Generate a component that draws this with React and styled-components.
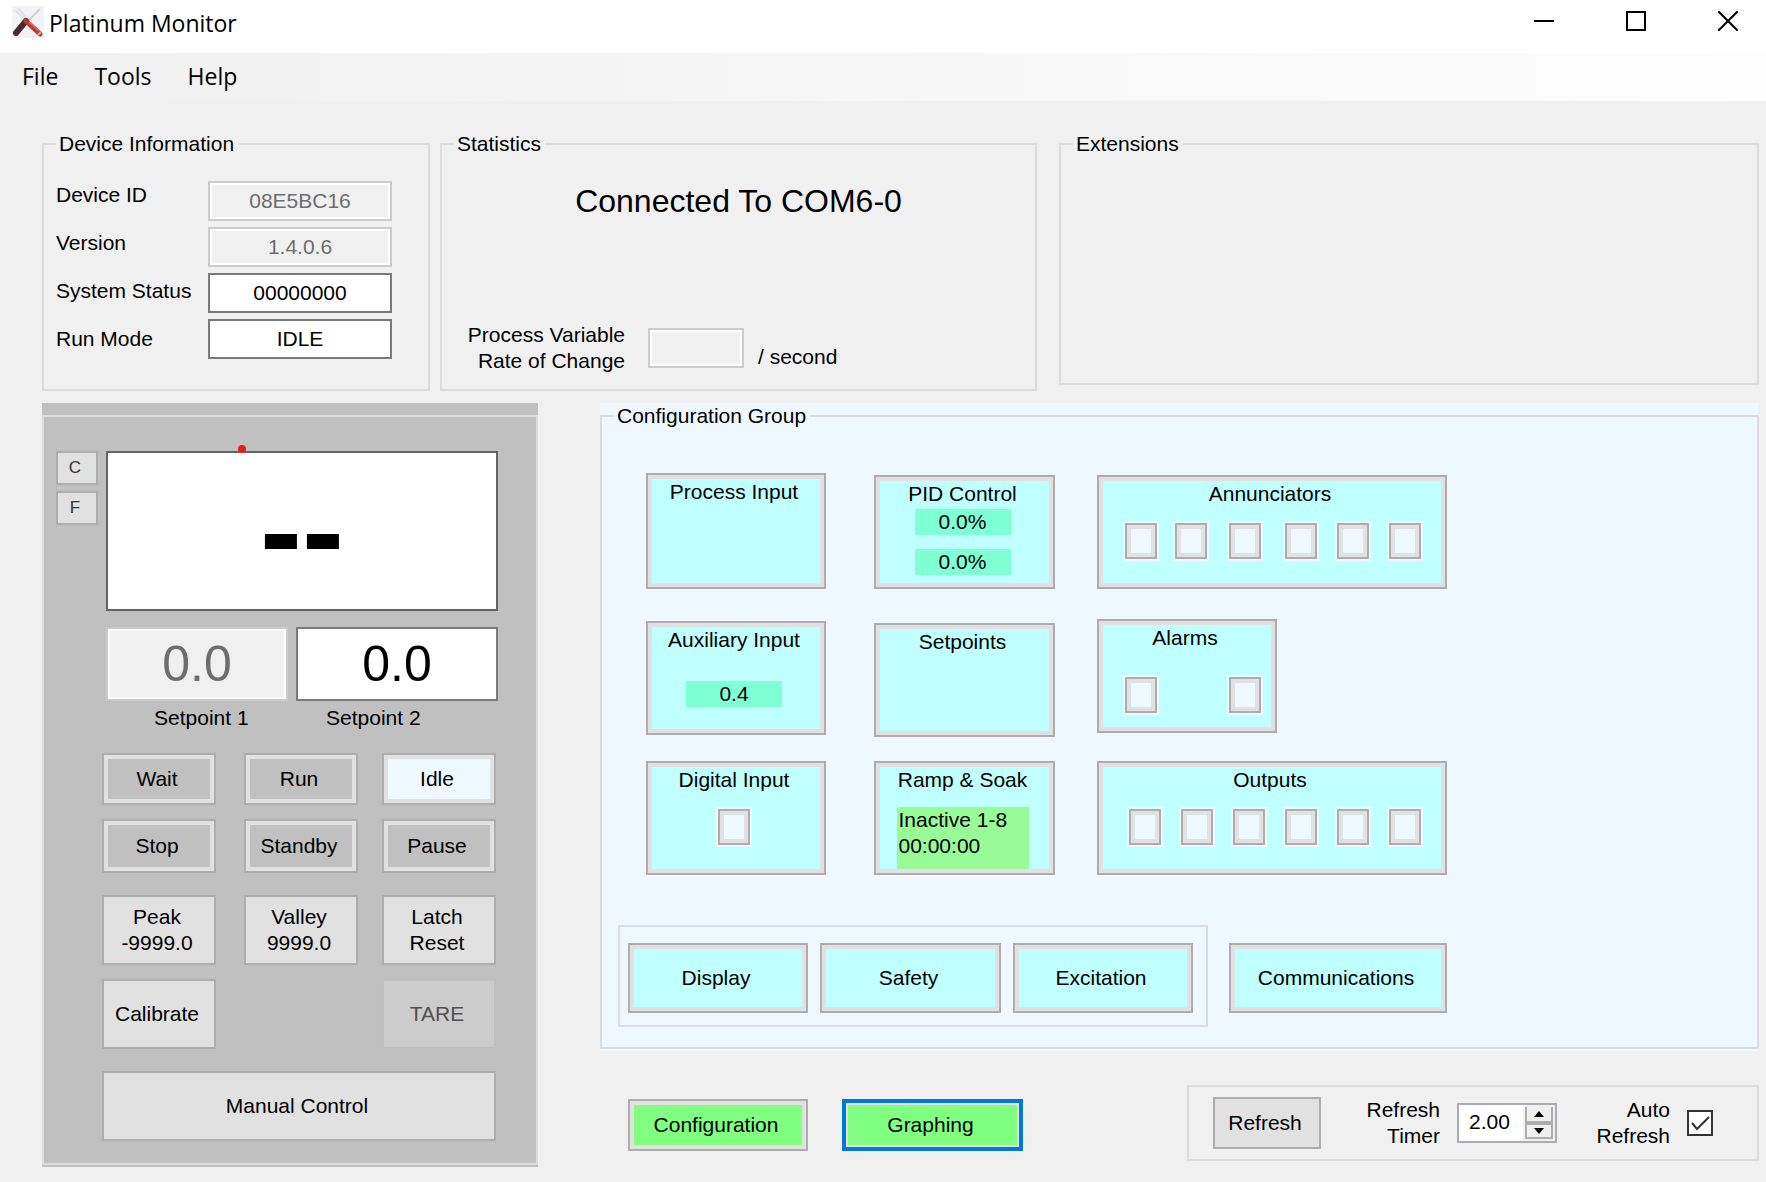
import React, { useState } from "react";
import styled, { createGlobalStyle, css } from "styled-components";

const GlobalStyle = createGlobalStyle`
  *, *::before, *::after { box-sizing: border-box; }
  body {
    margin: 0;
    background: #f0f0f0;
    color: #000;
    font: 21px/26px "Liberation Sans", Arial, sans-serif;
  }
  button, input { font: inherit; color: inherit; margin: 0; border-radius: 0; }
  fieldset { margin: 0; min-width: 0; }
`;

const Window = styled.div`
  display: flex;
  flex-direction: column;
  min-height: 100vh;
`;

/* ---------- title bar and menu ---------- */

const TitleBar = styled.header`
  display: flex;
  align-items: flex-start;
  gap: 5px;
  height: 53px;
  padding: 6px 18px 0 12px;
  background: #fff;
`;

const Title = styled.h1`
  flex: 1;
  margin: 0;
  font: 400 23px/34px "Open Sans", "Noto Sans", sans-serif;
`;

const WindowControls = styled.div`
  display: flex;
  gap: 52px;
`;

const WindowButton = styled.button`
  display: grid;
  place-items: center;
  width: 40px;
  height: 30px;
  padding: 0;
  border: 0;
  background: none;
`;

const MenuBar = styled.nav`
  display: flex;
  align-items: center;
  gap: 36px;
  height: 48px;
  padding: 0 22px 2px;
  background: linear-gradient(90deg, #f0f0f0, #fdfdfd);
`;

const MenuItem = styled.button`
  padding: 0;
  border: 0;
  background: none;
  font: 400 23px/30px "Open Sans", "Noto Sans", sans-serif;
`;

/* ---------- groups ---------- */

const Main = styled.main`
  display: flex;
  flex-direction: column;
  gap: 12px;
  padding: 30px 7px 15px 42px;
`;

const TopRow = styled.div`
  display: flex;
  gap: 22px;
`;

const TopPair = styled.div`
  display: flex;
  gap: 10px;
`;

const Group = styled.fieldset`
  display: flex;
  flex-direction: column;
  padding: 0;
  border: 2px solid #dcdcdc;
`;

const Legend = styled.legend`
  margin-left: 12px;
  padding: 0 4px 0 3px;
`;

const DeviceGroup = styled(Group)`
  width: 388px;
`;

const StatisticsGroup = styled(Group)`
  width: 597px;
`;

const ExtensionsGroup = styled(Group)`
  flex: 1;
  margin-bottom: 6px;
`;

const DeviceBody = styled.div`
  display: flex;
  padding: 24px 12px 30px;
`;

const FieldLabels = styled.div`
  display: flex;
  flex-direction: column;
  gap: 22px;
  width: 152px;
  padding-top: 1px;
`;

const FieldInputs = styled.div`
  display: flex;
  flex-direction: column;
  gap: 6px;
`;

const Field = styled.input`
  width: ${(p) => p.$width}px;
  height: ${(p) => (p.$large ? 74 : 40)}px;
  padding: 0;
  border: 2px solid #7a7a7a;
  background: #fff;
  text-align: center;
  outline: none;
  ${(p) => p.$large && css`font-size: 50px;`}
  &:disabled {
    border-color: #ccc;
    background: #f0f0f0;
    box-shadow: inset 0 0 0 2px #fff;
    color: #6d6d6d;
  }
`;

const StatisticsBody = styled.div`
  display: flex;
  flex: 1;
  flex-direction: column;
  justify-content: space-between;
  padding: 28px 0 15px;
`;

const Connection = styled.p`
  margin: 0;
  font-size: 32px;
  line-height: 32px;
  text-align: center;
`;

const RateRow = styled.div`
  display: flex;
  align-items: center;
`;

const RateLabel = styled.label`
  width: 183px;
  margin-right: 23px;
  text-align: right;
`;

const RateUnit = styled.span`
  padding: 18px 0 0 14px;
`;

/* ---------- buttons ---------- */

const faces = {
  plain: "#e1e1e1",
  silver: "#c0c0c0",
  active: "#f0f8ff",
  cyan: "#c0ffff",
  green: "#80ff80",
};

const PushButton = styled.button`
  width: ${(p) => (p.$width ? `${p.$width}px` : "100%")};
  height: ${(p) => (p.$height ? `${p.$height}px` : "100%")};
  padding: 0 4px 0 0;
  border: 2px solid #adadad;
  background: ${(p) => faces[p.$face || "plain"]};
  box-shadow: inset 0 0 0 4px #e1e1e1;
  ${(p) => p.$focused && css`
    border: 4px solid #0078d7;
    box-shadow: inset 0 0 0 2px #e1e1e1;
    outline: none;
  `}
  &:disabled {
    border-color: #bfbfbf;
    background: #ccc;
    box-shadow: none;
    color: #505050;
  }
`;

const UnitButton = styled(PushButton)`
  font-size: 17px;
  line-height: 20px;
  color: #333;
`;

/* ---------- control panel ---------- */

const BottomRow = styled.div`
  display: flex;
  align-items: flex-start;
  gap: 62px;
`;

const ControlPanel = styled.section`
  flex: 0 0 496px;
  padding: 12px 0 2px;
  background: #c0c0c0;
`;

const ControlGroup = styled(Group)`
  padding: 34px 38px 22px 12px;
`;

const DisplayRow = styled.div`
  display: flex;
  gap: 8px;
`;

const Units = styled.div`
  display: flex;
  flex-direction: column;
  gap: 6px;
`;

const Display = styled.output`
  position: relative;
  display: flex;
  flex: 1;
  align-items: center;
  justify-content: center;
  height: 160px;
  border: 2px solid #646464;
  background: #fff;
  font-size: 126px;
  font-weight: 700;
  line-height: 156px;
`;

const Marker = styled.span`
  position: absolute;
  top: -8px;
  left: 130px;
  width: 8px;
  height: 8px;
  border-radius: 50%;
  background: #e81e1e;
`;

const SetpointRow = styled.div`
  display: flex;
  gap: 8px;
  margin: 16px 0 4px;
  padding-left: 50px;
`;

const SetpointLabels = styled.div`
  display: grid;
  grid-template-columns: 172px auto;
  padding-left: 98px;
`;

const Keypad = styled.div`
  display: flex;
  flex-direction: column;
  gap: 22px;
  margin: 22px -36px 0 0;
  padding: 0 38px 0 46px;
`;

const KeyGrid = styled.div`
  display: grid;
  grid-template-columns: 142px 138px 114px;
  grid-template-rows: ${(p) => p.$rows};
  row-gap: 14px;
`;

/* ---------- configuration ---------- */

const RightColumn = styled.div`
  display: flex;
  flex: 1;
  flex-direction: column;
  gap: 34px;
  min-width: 0;
`;

const ConfigPanel = styled.section`
  padding-bottom: 2px;
  background: #f0f8ff;
`;

const ConfigBody = styled.div`
  padding: 44px 16px 20px;
`;

const TileRow = styled.div`
  display: grid;
  grid-template-columns: 228px 223px 350px;
  min-height: ${(p) => p.$height || 114}px;
  margin-bottom: ${(p) => p.$space}px;
  padding-left: 28px;
`;

const Tile = styled(PushButton)`
  display: flex;
  flex-direction: column;
  align-items: center;
  align-self: ${(p) => p.$align || "end"};
  padding: 4px 8px 4px 4px;
`;

const Value = styled.span`
  width: 96px;
  margin-top: ${(p) => p.$top}px;
  background: #7fffd4;
`;

const Profile = styled.span`
  width: 132px;
  height: 62px;
  margin-top: 14px;
  padding-left: 2px;
  background: #98fb98;
  text-align: left;
`;

const Lamps = styled.span`
  display: grid;
  grid-template-columns: ${(p) => p.$columns};
  margin-top: ${(p) => p.$top || 14}px;
  ${(p) => p.$side === "left" && css`align-self: flex-start; margin-left: 20px;`}
  ${(p) => p.$side === "right" && css`align-self: flex-end; margin-right: 14px;`}
`;

const Lamp = styled.span`
  width: 36px;
  height: 40px;
  border: 2px solid #f0f8ff;
  background: #f0f8ff;
  box-shadow: inset 0 0 0 2px #adadad, inset 0 0 0 6px #e1e1e1;
`;

const ModuleRow = styled.div`
  display: flex;
  gap: 21px;
`;

const ModuleGroup = styled(Group)`
  flex-direction: row;
  gap: 12px;
  padding: 16px 13px 12px 8px;
`;

const OuterModule = styled.div`
  padding-top: 18px;
`;

/* ---------- footer ---------- */

const Footer = styled.div`
  display: flex;
  align-items: flex-start;
  justify-content: space-between;
`;

const ModeButtons = styled.div`
  display: flex;
  gap: 34px;
  padding: 14px 0 0 28px;
`;

const RefreshGroup = styled(Group)`
  flex-direction: row;
  align-items: center;
  width: 572px;
  height: 76px;
  padding: 0 24px;
`;

const SideLabel = styled.label`
  width: ${(p) => p.$width}px;
  margin-right: 17px;
  text-align: right;
`;

const Spinner = styled.div`
  display: flex;
  width: 100px;
  height: 40px;
  border: 2px solid #abadb3;
  background: #fff;
`;

const SpinnerInput = styled.input`
  flex: 1;
  min-width: 0;
  padding: 0 0 2px 10px;
  border: 0;
  background: none;
  outline: none;
`;

const SpinnerButtons = styled.div`
  display: grid;
  grid-template-rows: 1fr 1fr;
  width: 32px;
  padding: 2px;
  background: #f0f0f0;
`;

const StepButton = styled.button`
  display: grid;
  place-items: center;
  padding: 0;
  border: 2px solid #adadad;
  border-top-width: ${(p) => (p.$up ? 0 : 2)}px;
  background: #f0f0f0;
`;

const CheckBox = styled.span`
  display: grid;
  width: 26px;
  height: 26px;
  > * { grid-area: 1 / 1; }
  > svg { pointer-events: none; visibility: hidden; }
  > input:checked + svg { visibility: visible; }
`;

const CheckInput = styled.input`
  width: 26px;
  height: 26px;
  appearance: none;
  border: 2px solid #333;
  background: #fff;
`;

const AppIcon = () => (
  <svg width="32" height="32" viewBox="0 0 32 32" aria-hidden="true">
    <rect width="32" height="32" fill="#f3f2f7" />
    <path d="M3 4 14 14M6 2l8 9" stroke="#e2e0ea" strokeWidth="2" />
    <path d="M28 3 16 15" stroke="#d2d0d8" strokeWidth="2" />
    <path d="M14 15 4 27" stroke="#4a2a2e" strokeWidth="6" strokeLinecap="round" />
    <path d="M14 15 28 28" stroke="#b8392d" strokeWidth="5" strokeLinecap="round" />
    <path d="M17 16 27 25" stroke="#dc6e5c" strokeWidth="1.5" />
    <path d="m26 29 3-3" stroke="#e8a79c" strokeWidth="2" />
  </svg>
);

const deviceFields = [
  { id: "device-id", label: "Device ID", value: "08E5BC16", disabled: true },
  { id: "version", label: "Version", value: "1.4.0.6", disabled: true },
  { id: "system-status", label: "System Status", value: "00000000" },
  { id: "run-mode", label: "Run Mode", value: "IDLE" },
];

const runKeys = ["Wait", "Run", "Idle", "Stop", "Standby", "Pause"];

const renderLamps = (count) => Array.from({ length: count }, (_, i) => <Lamp key={i} />);

export default function App() {
  const [seconds, setSeconds] = useState("2.00");
  const step = (by) =>
    setSeconds((s) => Math.max(0, (parseFloat(s) || 0) + by).toFixed(2));

  return (
    <Window>
      <GlobalStyle />
      <TitleBar>
        <AppIcon />
        <Title>Platinum Monitor</Title>
        <WindowControls>
          <WindowButton aria-label="Minimize">
            <svg width="20" height="20"><path d="M0 10h20" stroke="#000" strokeWidth="2" /></svg>
          </WindowButton>
          <WindowButton aria-label="Maximize">
            <svg width="20" height="20"><path d="M1 1h18v18H1z" fill="none" stroke="#000" strokeWidth="2" /></svg>
          </WindowButton>
          <WindowButton aria-label="Close">
            <svg width="20" height="20"><path d="M0 0l20 20M20 0L0 20" stroke="#000" strokeWidth="2" /></svg>
          </WindowButton>
        </WindowControls>
      </TitleBar>
      <MenuBar>
        <MenuItem>File</MenuItem>
        <MenuItem>Tools</MenuItem>
        <MenuItem>Help</MenuItem>
      </MenuBar>

      <Main>
        <TopRow>
          <TopPair>
            <DeviceGroup>
              <Legend>Device Information</Legend>
              <DeviceBody>
                <FieldLabels>
                  {deviceFields.map((f) => (
                    <label key={f.id} htmlFor={f.id}>{f.label}</label>
                  ))}
                </FieldLabels>
                <FieldInputs>
                  {deviceFields.map((f) => (
                    <Field key={f.id} id={f.id} $width={184} defaultValue={f.value} disabled={f.disabled} readOnly />
                  ))}
                </FieldInputs>
              </DeviceBody>
            </DeviceGroup>
            <StatisticsGroup>
              <Legend>Statistics</Legend>
              <StatisticsBody>
                <Connection>Connected To COM6-0</Connection>
                <RateRow>
                  <RateLabel htmlFor="rate">Process Variable<br />Rate of Change</RateLabel>
                  <Field id="rate" $width={96} disabled />
                  <RateUnit>/ second</RateUnit>
                </RateRow>
              </StatisticsBody>
            </StatisticsGroup>
          </TopPair>
          <ExtensionsGroup>
            <Legend>Extensions</Legend>
          </ExtensionsGroup>
        </TopRow>

        <BottomRow>
          <ControlPanel>
            <ControlGroup>
              <DisplayRow>
                <Units>
                  <UnitButton $width={42} $height={34}>C</UnitButton>
                  <UnitButton $width={42} $height={34}>F</UnitButton>
                </Units>
                <Display>
                  --
                  <Marker />
                </Display>
              </DisplayRow>
              <SetpointRow>
                <Field id="setpoint-1" $width={182} $large defaultValue="0.0" disabled />
                <Field id="setpoint-2" $width={202} $large defaultValue="0.0" />
              </SetpointRow>
              <SetpointLabels>
                <label htmlFor="setpoint-1">Setpoint 1</label>
                <label htmlFor="setpoint-2">Setpoint 2</label>
              </SetpointLabels>
              <Keypad>
                <KeyGrid $rows="52px 54px">
                  {runKeys.map((k) => (
                    <PushButton key={k} $width={114} $face={k === "Idle" ? "active" : "silver"}>{k}</PushButton>
                  ))}
                </KeyGrid>
                <KeyGrid $rows="70px 70px">
                  <PushButton $width={114}>Peak<br />-9999.0</PushButton>
                  <PushButton $width={114}>Valley<br />9999.0</PushButton>
                  <PushButton $width={114}>Latch<br />Reset</PushButton>
                  <PushButton $width={114}>Calibrate</PushButton>
                  <span />
                  <PushButton $width={114} disabled>TARE</PushButton>
                </KeyGrid>
                <PushButton $height={70}>Manual Control</PushButton>
              </Keypad>
            </ControlGroup>
          </ControlPanel>

          <RightColumn>
            <ConfigPanel>
              <Group>
                <Legend>Configuration Group</Legend>
                <ConfigBody>
                  <TileRow $space={30}>
                    <Tile $face="cyan" $width={180} $height={116}>Process Input</Tile>
                    <Tile $face="cyan" $width={181} $height={114}>
                      PID Control
                      <Value $top={2}>0.0%</Value>
                      <Value $top={14}>0.0%</Value>
                    </Tile>
                    <Tile $face="cyan" $width={350} $height={114}>
                      Annunciators
                      <Lamps $side="left" $columns="50px 54px 56px 52px 52px 36px">{renderLamps(6)}</Lamps>
                    </Tile>
                  </TileRow>
                  <TileRow $height={118} $space={24}>
                    <Tile $face="cyan" $width={180} $height={114} $align="center">
                      Auxiliary Input
                      <Value $top={28}>0.4</Value>
                    </Tile>
                    <Tile $face="cyan" $width={181} $height={114}>Setpoints</Tile>
                    <Tile $face="cyan" $width={180} $height={114} $align="start">
                      Alarms
                      <Lamps $side="left" $top={24} $columns="104px 36px">{renderLamps(2)}</Lamps>
                    </Tile>
                  </TileRow>
                  <TileRow $space={50}>
                    <Tile $face="cyan" $width={180} $height={114}>
                      Digital Input
                      <Lamps $columns="36px">{renderLamps(1)}</Lamps>
                    </Tile>
                    <Tile $face="cyan" $width={181} $height={114}>
                      Ramp &amp; Soak
                      <Profile>Inactive 1-8<br />00:00:00</Profile>
                    </Tile>
                    <Tile $face="cyan" $width={350} $height={114}>
                      Outputs
                      <Lamps $side="right" $columns="repeat(5, 52px) 36px">{renderLamps(6)}</Lamps>
                    </Tile>
                  </TileRow>
                  <ModuleRow>
                    <ModuleGroup>
                      <PushButton $face="cyan" $width={180} $height={70}>Display</PushButton>
                      <PushButton $face="cyan" $width={181} $height={70}>Safety</PushButton>
                      <PushButton $face="cyan" $width={180} $height={70}>Excitation</PushButton>
                    </ModuleGroup>
                    <OuterModule>
                      <PushButton $face="cyan" $width={218} $height={70}>Communications</PushButton>
                    </OuterModule>
                  </ModuleRow>
                </ConfigBody>
              </Group>
            </ConfigPanel>

            <Footer>
              <ModeButtons>
                <PushButton $face="green" $width={180} $height={52}>Configuration</PushButton>
                <PushButton $face="green" $width={181} $height={52} $focused>Graphing</PushButton>
              </ModeButtons>
              <RefreshGroup>
                <PushButton $width={108} $height={52}>Refresh</PushButton>
                <SideLabel htmlFor="timer" $width={119}>Refresh<br />Timer</SideLabel>
                <Spinner>
                  <SpinnerInput id="timer" inputMode="decimal" value={seconds} onChange={(e) => setSeconds(e.target.value)} />
                  <SpinnerButtons>
                    <StepButton $up aria-label="Increase" onClick={() => step(0.25)}>
                      <svg width="10" height="6"><path d="M0 6 5 0l5 6z" /></svg>
                    </StepButton>
                    <StepButton aria-label="Decrease" onClick={() => step(-0.25)}>
                      <svg width="10" height="6"><path d="M0 0h10L5 6z" /></svg>
                    </StepButton>
                  </SpinnerButtons>
                </Spinner>
                <SideLabel htmlFor="auto" $width={113}>Auto<br />Refresh</SideLabel>
                <CheckBox>
                  <CheckInput id="auto" type="checkbox" defaultChecked />
                  <svg width="26" height="26"><path d="M5 13l5 6L22 7" fill="none" stroke="#333" strokeWidth="2" /></svg>
                </CheckBox>
              </RefreshGroup>
            </Footer>
          </RightColumn>
        </BottomRow>
      </Main>
    </Window>
  );
}
